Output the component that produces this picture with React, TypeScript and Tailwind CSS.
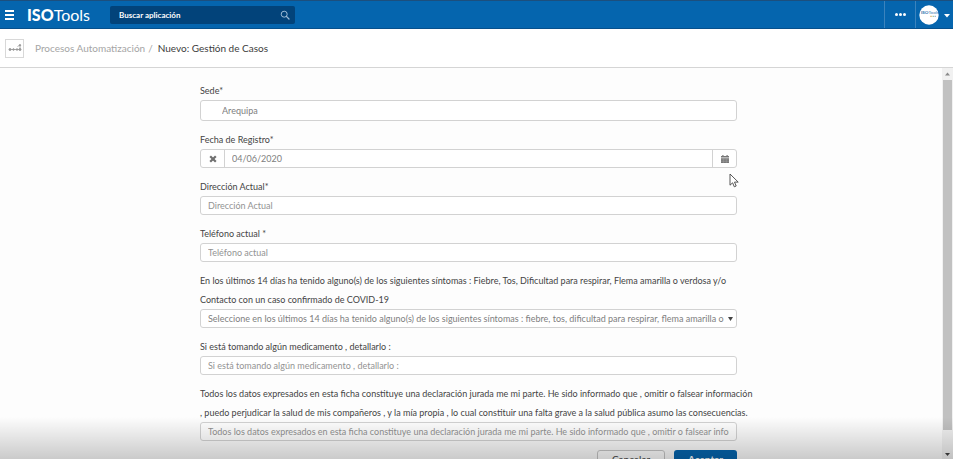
import { useState } from "react";
import type { ReactNode } from "react";

const opcionSintomas =
  "Seleccione en los últimos 14 días ha tenido alguno(s) de los siguientes síntomas : fiebre, tos, dificultad para respirar, flema amarilla o";

const textoSintomas = [
  "En los últimos 14 días ha tenido alguno(s) de los siguientes síntomas : Fiebre, Tos, Dificultad para respirar, Flema amarilla o verdosa y/o",
  "Contacto con un caso confirmado de COVID-19",
];

const textoDeclaracion = [
  "Todos los datos expresados en esta ficha constituye una declaración jurada me mi parte. He sido informado que , omitir o falsear información",
  ", puedo perjudicar la salud de mis compañeros , y la mía propia , lo cual constituir una falta grave a la salud pública asumo las consecuencias.",
];

const inputClass =
  "block h-[19px] w-full rounded-[3px] border border-[#d2d2d2] bg-white px-[7px] text-[9px] text-[#808080] outline-none placeholder:text-[#939393]";

function Campo({
  id,
  label,
  children,
}: {
  id: string;
  label: string;
  children: ReactNode;
}) {
  return (
    <div>
      <label htmlFor={id} className="block text-[9px] leading-[19px] whitespace-pre text-[#444]">
        {label}
      </label>
      {children}
    </div>
  );
}

function Cabecera() {
  return (
    <header className="flex h-[29px] shrink-0 items-center border-t border-b border-t-[#1c4f7e] border-b-[#07508c] bg-[#0565ae]">
      <button aria-label="Menú" className="ml-[5px] flex w-[9px] flex-col gap-[2px]">
        <span className="h-[2px] w-full bg-white" />
        <span className="h-[2px] w-full bg-white" />
        <span className="h-[2px] w-full bg-white" />
      </button>

      <a href="#" className="ml-[13px] w-[70px] text-[16px] leading-none text-white">
        <b className="font-black">ISO</b>Tools
      </a>

      <div className="ml-[13px] flex h-[18px] w-[185px] items-center rounded-[2px] bg-[#02437a] pr-[5px] pl-[9px]">
        <input
          type="search"
          aria-label="Buscar aplicación"
          placeholder="Buscar aplicación"
          className="min-w-0 flex-1 bg-transparent text-[8px] font-bold text-white outline-none placeholder:text-white"
        />
        <button aria-label="Buscar">
          <svg viewBox="0 0 10 10" className="h-[10px] w-[10px]" fill="none" stroke="#9dbbd6">
            <circle cx="4.2" cy="4.2" r="3" />
            <path d="M6.4 6.4L9 9" strokeWidth="1.3" strokeLinecap="round" />
          </svg>
        </button>
      </div>

      <button
        aria-label="Más opciones"
        className="ml-auto flex h-full w-[32px] items-center justify-center gap-px border-r border-l border-[#3b83bd]"
      >
        <span className="h-[3px] w-[3px] rounded-full bg-white" />
        <span className="h-[3px] w-[3px] rounded-full bg-white" />
        <span className="h-[3px] w-[3px] rounded-full bg-white" />
      </button>

      <button aria-label="Usuario" className="mr-[3px] ml-[3px] flex items-center gap-[5px]">
        <svg viewBox="0 0 20 20" className="h-[20px] w-[20px]">
          <circle cx="10" cy="10" r="9.7" fill="#fff" />
          <text x="2" y="9" fontSize="4.5" fill="#3777b0">
            <tspan fontWeight="900">ISO</tspan>Tools
          </text>
          <path d="M11 11.3h2" stroke="#e0b878" />
          <path d="M13.5 11.3h1.5" stroke="#91b990" />
          <path d="M15.5 11.3h1.5" stroke="#81aacc" />
        </svg>
        <svg viewBox="0 0 6 4" className="mt-[3px] h-[4px] w-[6px]" fill="#fff">
          <path d="M0 0h6L3 3.6z" />
        </svg>
      </button>
    </header>
  );
}

function Migas() {
  return (
    <nav className="flex h-[39px] shrink-0 items-center border-b border-[#d5d5d5] bg-white pl-[5px] text-[10px]">
      <span className="flex h-[19px] w-[19px] items-center justify-center border border-[#d8d8d8]">
        <svg viewBox="0 0 14 10" className="h-[10px] w-[14px]" fill="#999" stroke="#999">
          <path d="M1.5 6.5h10M9.5 3.5L12 2M12 2v4.5" fill="none" strokeWidth="0.8" />
          <circle cx="2" cy="6.5" r="1" />
          <circle cx="5.5" cy="6.5" r="0.8" />
          <circle cx="9" cy="6.5" r="0.8" />
          <circle cx="12" cy="6.5" r="1" />
          <circle cx="12" cy="2.2" r="0.7" />
        </svg>
      </span>
      <a href="#" className="ml-[11px] text-[#a5a5a5]">
        Procesos Automatización
      </a>
      <span className="ml-[3px] text-[#a5a5a5]">/</span>
      <span className="ml-[5px] text-[#3c3c3c]">Nuevo: Gestión de Casos</span>
    </nav>
  );
}

function BarraDesplazamiento() {
  return (
    <div className="flex w-[11px] shrink-0 flex-col items-center bg-[#f1f1f1]">
      <svg viewBox="0 0 11 12" className="h-[12px] w-[11px]" fill="#8a8a8a">
        <path d="M3 7.5h5L5.5 4.5z" />
      </svg>
      <div className="mr-px w-[9px] flex-[350] bg-[#c1c1c1]" />
      <div className="flex-[19]" />
      <svg viewBox="0 0 11 10" className="h-[10px] w-[11px]" fill="#404040">
        <path d="M3 4h5L5.5 7z" />
      </svg>
    </div>
  );
}

export default function App() {
  const [sede, setSede] = useState("Arequipa");
  const [fecha, setFecha] = useState("04/06/2020");

  return (
    <div className="relative flex h-screen flex-col overflow-hidden bg-[#fdfdfd] font-[Lato,sans-serif]">
      <Cabecera />
      <Migas />

      <div className="flex min-h-0 flex-1">
        <main className="min-w-0 flex-1 overflow-hidden pt-[13px] pr-[5px]">
          <form className="mx-auto flex max-w-[537px] flex-col gap-[9px]">
            <Campo id="sede" label="Sede*">
              <input
                id="sede"
                value={sede}
                onChange={(e) => setSede(e.target.value)}
                className="block h-[21px] w-full rounded-[3px] border border-[#d2d2d2] bg-white px-[21px] text-[9px] text-[#808080] outline-none"
              />
            </Campo>

            <Campo id="fecha" label="Fecha de Registro*">
              <div className="relative flex h-[19px] rounded-[3px] border border-[#d2d2d2] bg-white">
                <button
                  type="button"
                  aria-label="Borrar fecha"
                  onClick={() => setFecha("")}
                  className="flex w-[24px] items-center justify-center border-r border-[#d2d2d2]"
                >
                  <svg viewBox="0 0 8 8" className="h-[8px] w-[8px]" stroke="#707070" strokeWidth="2.2">
                    <path d="M1.2 1.2l5.6 5.6M6.8 1.2L1.2 6.8" />
                  </svg>
                </button>
                <input
                  id="fecha"
                  value={fecha}
                  onChange={(e) => setFecha(e.target.value)}
                  className="min-w-0 flex-1 px-[7px] text-[9px] text-[#808080] outline-none"
                />
                <button
                  type="button"
                  aria-label="Abrir calendario"
                  className="flex w-[24px] items-center justify-center border-l border-[#d2d2d2]"
                >
                  <svg viewBox="0 0 8 8" className="h-[8px] w-[8px]" fill="#777">
                    <path d="M0 1h1.3V0h1.2v1h3V0h1.2v1H8v1.6H0zM0 3.2h8V8H0z" />
                    <path d="M0 4.8h8M0 6.4h8M2.6 3.2V8M5.3 3.2V8" stroke="#aaa" strokeWidth="0.4" />
                  </svg>
                </button>
                <svg
                  viewBox="0 0 10 15"
                  className="pointer-events-none absolute -right-[3px] top-[23px] h-[15px] w-[10px]"
                  fill="#fff"
                  stroke="#444"
                  strokeWidth="0.9"
                >
                  <path d="M1 1v11.2l2.6-2.4 1.7 4 1.9-.8-1.7-3.9h3.7z" />
                </svg>
              </div>
            </Campo>

            <Campo id="direccion" label="Dirección Actual*">
              <input id="direccion" placeholder="Dirección Actual" className={inputClass} />
            </Campo>

            <Campo id="telefono" label="Teléfono actual *">
              <input id="telefono" type="tel" placeholder="Teléfono actual" className={inputClass} />
            </Campo>

            <Campo id="sintomas" label={textoSintomas.join("\n")}>
              <div className="relative">
                <select
                  id="sintomas"
                  className="block h-[19px] w-full appearance-none rounded-[3px] border border-[#d2d2d2] bg-white pr-[10px] pl-[7px] text-[9px] text-[#808080] outline-none"
                >
                  <option>{opcionSintomas}</option>
                </select>
                <svg
                  viewBox="0 0 5 4"
                  className="pointer-events-none absolute top-[8px] right-[4px] h-[4px] w-[5px]"
                  fill="#444"
                >
                  <path d="M0 0h5L2.5 4z" />
                </svg>
              </div>
            </Campo>

            <Campo id="medicamento" label="Si está tomando algún medicamento , detallarlo :">
              <input
                id="medicamento"
                placeholder="Si está tomando algún medicamento , detallarlo :"
                className={inputClass}
              />
            </Campo>

            <Campo id="declaracion" label={textoDeclaracion.join("\n")}>
              <input
                id="declaracion"
                placeholder={textoDeclaracion.join(" ")}
                className={inputClass}
              />
            </Campo>

            <div className="flex justify-end gap-[9px] text-[10px]">
              <button
                type="button"
                className="h-[19px] w-[68px] rounded-[3px] border border-[#c6c6c6] bg-white text-[#444]"
              >
                Cancelar
              </button>
              <button
                type="submit"
                className="h-[19px] w-[63px] rounded-[3px] bg-[#0565ae] font-bold text-white"
              >
                Aceptar
              </button>
            </div>
          </form>
        </main>

        <BarraDesplazamiento />
      </div>

      <div className="pointer-events-none absolute inset-x-0 bottom-0 h-[42px] bg-linear-to-b from-black/0 to-black/20" />
    </div>
  );
}
